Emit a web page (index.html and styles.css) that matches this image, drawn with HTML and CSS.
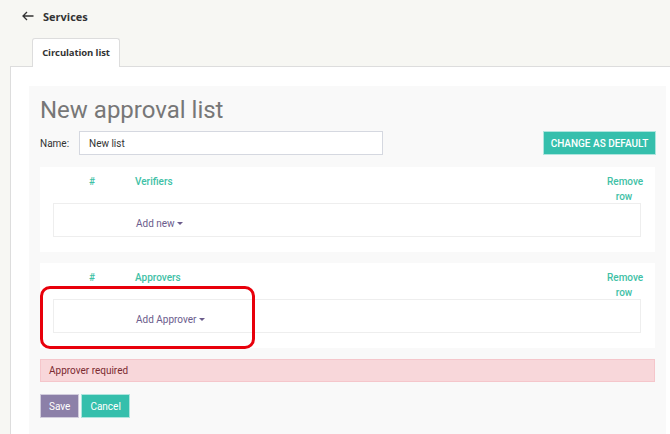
FILE: index.html
```html
<!DOCTYPE html>
<html>

<head>
	<title>New approval list</title>
	<link rel="stylesheet" href="styles.css">
</head>

<body>
	<div class="topbar">
		<svg class="back" width="12" height="10" viewBox="0 0 12 10">
			<path d="M11.5 5H1.2M5 1L1 5l4 4" fill="none" stroke="#333" stroke-width="1.3" />
		</svg>
		<span>Services</span>
	</div>
	<div class="tabs">
		<div class="tab">Circulation list</div>
	</div>
	<div class="panel">
		<div class="inner">
			<h1>New approval list</h1>
			<div class="name-row">
				<label>Name:</label>
				<input type="text" value="New list">
				<div class="grow"></div>
				<button class="btn teal upper">CHANGE AS DEFAULT</button>
			</div>
			<div class="card">
				<div class="head">
					<div class="num">#</div>
					<div class="title">Verifiers</div>
					<div class="remove">Remove<br>row</div>
				</div>
				<div class="line">
					<div class="num"></div>
					<div class="add">Add new <span class="caret"></span></div>
				</div>
			</div>
			<div class="card">
				<div class="head">
					<div class="num">#</div>
					<div class="title">Approvers</div>
					<div class="remove">Remove<br>row</div>
				</div>
				<div class="line">
					<div class="num"></div>
					<div class="add">Add Approver <span class="caret"></span></div>
				</div>
				<div class="mark"></div>
			</div>
			<div class="alert">Approver required</div>
			<div class="actions">
				<button class="btn purple">Save</button>
				<button class="btn teal">Cancel</button>
			</div>
		</div>
	</div>
</body>

</html>
```

FILE: styles.css
```css
html,
body {
	margin: 0;
	padding: 0;
}

body {
	display: flex;
	flex-direction: column;
	height: 100vh;
	background: #f7f7f3;
	font-family: Roboto, sans-serif;
	font-size: 10px;
	overflow: hidden;
}

.topbar {
	display: flex;
	align-items: center;
	height: 32px;
	padding-left: 22px;
	font-family: "Open Sans", sans-serif;
	font-weight: 700;
	font-size: 11px;
	color: #333;
}

.back {
	margin-right: 9px;
}

.tabs {
	display: flex;
	padding: 6px 0 0 32px;
}

.tab {
	width: 86px;
	height: 28px;
	line-height: 28px;
	background: #fff;
	border: 1px solid #ddd;
	border-bottom: 0;
	border-radius: 3px 3px 0 0;
	margin-bottom: -1px;
	position: relative;
	text-align: center;
	font-family: "Open Sans", sans-serif;
	font-weight: 700;
	font-size: 9.5px;
	letter-spacing: -0.1px;
	color: #333;
}

.panel {
	flex: 1;
	display: flex;
	margin-left: 10px;
	background: #fff;
	border-top: 1px solid #ddd;
	border-left: 1px solid #ddd;
	padding: 19px 4px 0 18px;
}

.inner {
	flex: 1;
	background: #f9f9f9;
	padding: 8px 11px 0 11px;
}

h1 {
	margin: 0;
	font-weight: 400;
	font-size: 24px;
	line-height: 32px;
	color: #777;
}

.name-row {
	display: flex;
	align-items: center;
	margin-top: 5px;
	height: 24px;
}

label {
	color: #333;
	width: 39px;
}

input {
	width: 304px;
	height: 24px;
	box-sizing: border-box;
	border: 1px solid #d5d8e0;
	padding: 0 9px;
	font-family: Roboto, sans-serif;
	font-size: 10px;
	color: #333;
}

.grow {
	flex: 1;
}

.btn {
	height: 24px;
	border: 1px solid rgba(255, 255, 255, 0.6);
	color: #fff;
	font-family: Roboto, sans-serif;
	font-size: 10px;
	padding: 0 8px;
	white-space: nowrap;
}

.teal {
	background: #35bfac;
}

.purple {
	background: #8c80a8;
}

.upper {
	font-weight: 500;
	width: 113px;
	padding: 0;
	margin-right: -1px;
}

.card {
	position: relative;
	background: #fff;
	margin-top: 12px;
	padding: 7px 14px 15px 13px;
}

.card+.card {
	margin-top: 11px;
}

.head,
.line {
	display: flex;
}

.head {
	font-weight: 500;
	line-height: 15px;
	color: #3fc1a6;
	height: 29px;
}

.num {
	width: 78px;
	text-align: center;
}

.title,
.add {
	padding-left: 4px;
	flex: 1;
}

.remove {
	width: 34px;
	text-align: center;
}

.line {
	height: 34px;
	box-sizing: border-box;
	border: 1px solid #eee;
	align-items: center;
	padding-top: 6px;
}

.add {
	color: #6b5c8c;
}

.caret {
	display: inline-block;
	border-left: 3px solid transparent;
	border-right: 3px solid transparent;
	border-top: 3px solid #6b5c8c;
	vertical-align: 2px;
}

.mark {
	position: absolute;
	left: 0;
	top: 23px;
	width: 209px;
	height: 57px;
	border: 3px solid #e8000b;
	border-radius: 10px;
}

.alert {
	margin-top: 11px;
	height: 23px;
	box-sizing: border-box;
	line-height: 21px;
	background: #f8d7da;
	border: 1px solid #f5c6cb;
	padding-left: 8px;
	color: #7b2a30;
}

.actions {
	display: flex;
	gap: 2px;
	margin-top: 12px;
}
```
